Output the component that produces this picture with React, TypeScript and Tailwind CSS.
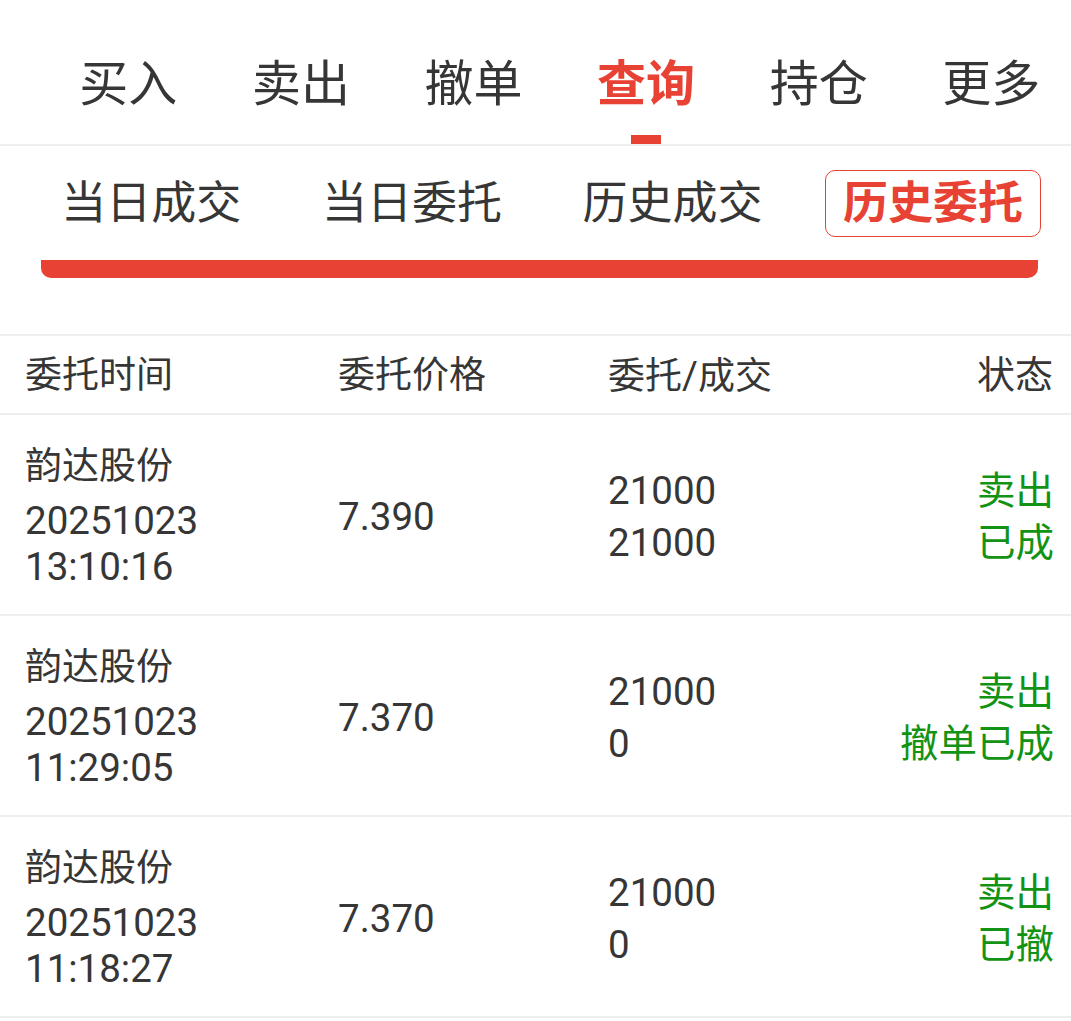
import React from "react";

const FONT = "font-['Roboto','Noto_Sans_CJK_SC',sans-serif]";

const topTabs = ["买入", "卖出", "撤单", "查询", "持仓", "更多"];
const subTabs = ["当日成交", "当日委托", "历史成交", "历史委托"];

type Row = {
  name: string;
  date: string;
  time: string;
  price: string;
  qty: string;
  filled: string;
  side: string;
  status: string;
};

const rows: Row[] = [
  { name: "韵达股份", date: "20251023", time: "13:10:16", price: "7.390", qty: "21000", filled: "21000", side: "卖出", status: "已成" },
  { name: "韵达股份", date: "20251023", time: "11:29:05", price: "7.370", qty: "21000", filled: "0", side: "卖出", status: "撤单已成" },
  { name: "韵达股份", date: "20251023", time: "11:18:27", price: "7.370", qty: "21000", filled: "0", side: "卖出", status: "已撤" },
];

export default function App() {
  return (
    <div className={`${FONT} w-[1071px] h-[1021px] bg-white text-[#363636] overflow-hidden`}>
      {/* top nav */}
      <div className="flex pl-[42px] border-b-2 border-[#eeeeee] overflow-hidden">
        {topTabs.map((t) => {
          const active = t === "查询";
          return (
            <div key={t} className="w-[172.6px] shrink-0 flex flex-col items-center pt-[60px]">
              <span
                className={`text-[49px] leading-[50px] ${active ? "text-[#e84234] font-bold" : "text-[#363636]"}`}
              >
                {t}
              </span>
              <div className={`mt-[25px] h-[9px] w-[30px] ${active ? "bg-[#e84234]" : "bg-transparent"}`} />
            </div>
          );
        })}
      </div>

      {/* sub tabs */}
      <div className="pt-[24px] border-b-2 border-[#eeeeee] pb-[56px]">
        <div className="flex pl-[21px]">
          {subTabs.map((t) => {
            const active = t === "历史委托";
            return (
              <div key={t} className="w-[260.6px] shrink-0 flex justify-center">
                <div
                  className={`w-[216px] h-[67px] rounded-[10px] border flex items-center justify-center ${
                    active ? "border-[#e84234]" : "border-transparent"
                  }`}
                >
                  <span
                    className={`text-[45px] leading-none ${active ? "text-[#e84234] font-bold" : "text-[#363636]"}`}
                  >
                    {t}
                  </span>
                </div>
              </div>
            );
          })}
        </div>
        <div className="mt-[23px] ml-[41px] w-[997px] h-[18px] bg-[#e84234] rounded-b-[10px]" />
      </div>

      {/* header */}
      <div className="flex items-center h-[79px] border-b-2 border-[#eeeeee] text-[37px] pt-[2px]">
        <div className="w-[338px] pl-[25px]">委托时间</div>
        <div className="w-[270px]">委托价格</div>
        <div className="w-[270px]">
          委托<span className="text-[38.5px]">/</span>成交
        </div>
        <div className="flex-1 text-right pr-[18px] text-[38px]">状态</div>
      </div>

      {rows.map((r, i) => (
        <div key={i} className="flex items-center h-[201px] border-b-2 border-[#eeeeee] text-[37px]">
          <div className="w-[338px] pl-[25px] pt-[4px] flex flex-col">
            <span className="leading-[46px]">{r.name}</span>
            <span className="leading-[46px] mt-[8px] text-[38.5px]">{r.date}</span>
            <span className="leading-[46px] text-[38.5px]">{r.time}</span>
          </div>
          <div className="w-[270px] pt-[4px] leading-[46px] text-[38.5px]">{r.price}</div>
          <div className="w-[270px] pt-[4px] flex flex-col text-[38.5px]">
            <span className="leading-[52px]">{r.qty}</span>
            <span className="leading-[52px]">{r.filled}</span>
          </div>
          <div className="flex-1 pt-[4px] flex flex-col items-end pr-[17px] text-[#139313] text-[38.5px]">
            <span className="leading-[52px]">{r.side}</span>
            <span className="leading-[52px]">{r.status}</span>
          </div>
        </div>
      ))}
    </div>
  );
}
